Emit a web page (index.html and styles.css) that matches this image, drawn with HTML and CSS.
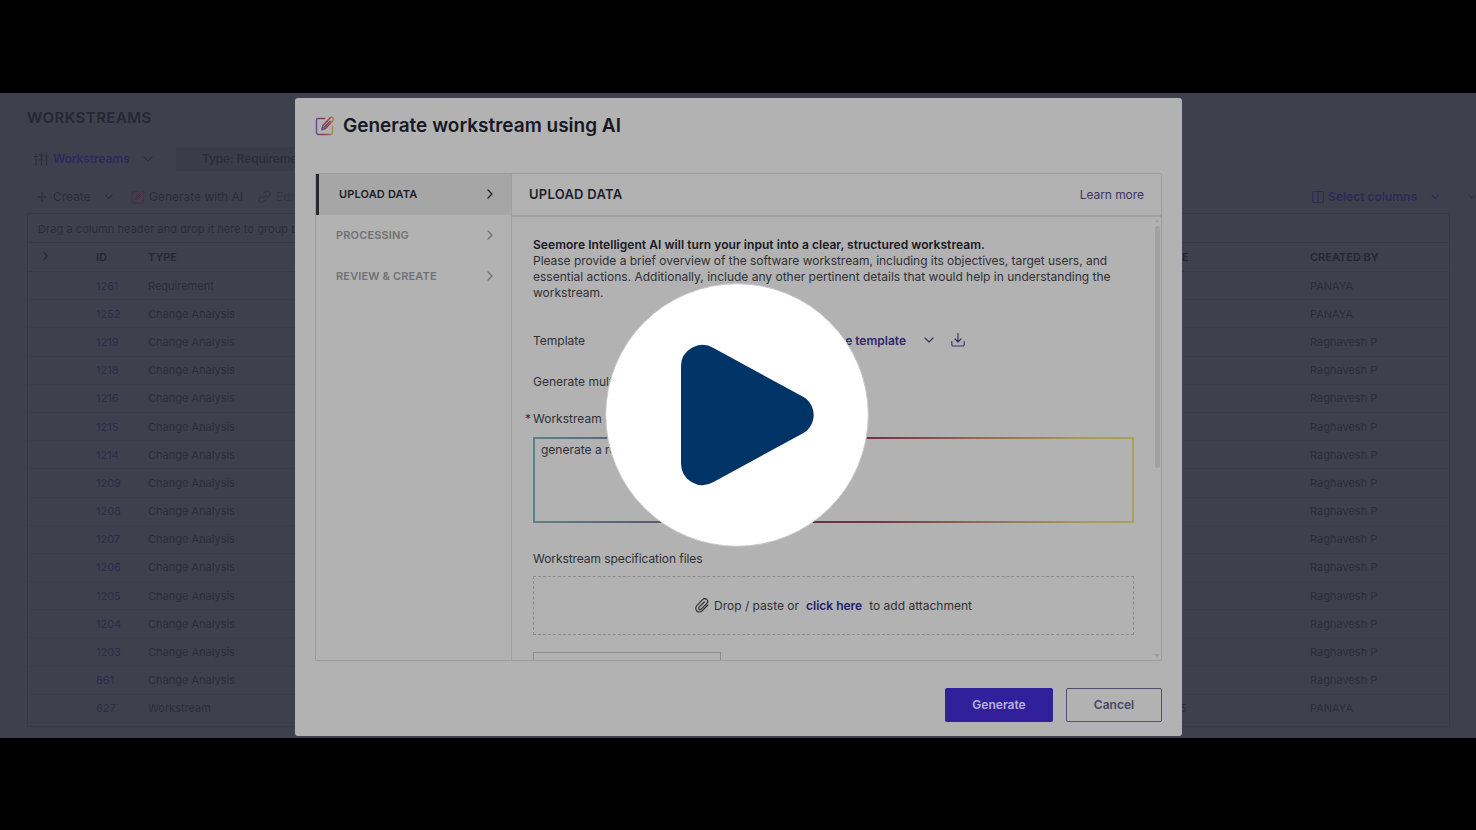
FILE: index.html
```html
<!DOCTYPE html>
<html lang="en">
<head>
  <meta charset="UTF-8" />
  <meta name="viewport" content="width=device-width, initial-scale=1" />
  <title>Workstreams</title>
  <link rel="stylesheet" href="styles.css">
</head>
<body>

  <!-- Shared icons -->
  <svg class="defs" width="0" height="0" aria-hidden="true">
    <defs>
      <linearGradient id="editGradient" x1="0" y1="0" x2="1" y2="0">
        <stop offset="0" stop-color="#66508c" />
        <stop offset="0.4" stop-color="#8b3a50" />
        <stop offset="0.7" stop-color="#9a5248" />
        <stop offset="1" stop-color="#a98c50" />
      </linearGradient>
    </defs>
    <symbol id="chevronDown" viewBox="0 0 10 10"><path d="M1 3l4 4 4-4" /></symbol>
    <symbol id="chevronRight" viewBox="0 0 10 10"><path d="M3 1l4 4-4 4" /></symbol>
    <symbol id="edit" viewBox="0 0 20 20">
      <path d="M10 2.500H3.200A1.700 1.700 0 0 0 1.500 4.200v12.600a1.700 1.700 0 0 0 1.700 1.700h12.600a1.700 1.700 0 0 0 1.700-1.700V10" />
      <path d="M15.500 1.600c1.300-1.200 4.100.9 2.800 2.600L10.500 12.500 6.800 13.800 7.700 9.800zM9 11.500l6-6.300" />
    </symbol>
  </svg>

  <div class="video">
    <main class="page">
      <h1>WORKSTREAMS</h1>

      <div class="filters">
        <svg class="icon" width="15" height="14" viewBox="0 0 15 14"><path d="M2 1v2M2 6v7M0.500 4.500h3M7.500 1v6M7.500 10v3M5.500 8h4M5.500 3h4M12.500 1v1M12.500 5v8M11 4h3" /></svg>
        <span class="view-name">Workstreams</span>
        <svg class="icon chev" width="10" height="10"><use href="#chevronDown" /></svg>
        <span class="filter-chip">Type: Requirement</span>
      </div>

      <div class="toolbar">
        <svg class="icon" width="10" height="10" viewBox="0 0 10 10"><path d="M5 0v10M0 5h10" /></svg>
        <span class="create">Create</span>
        <svg class="icon" width="9" height="9"><use href="#chevronDown" /></svg>
        <svg class="icon ai" width="14" height="14"><use href="#edit" /></svg>
        <span class="with-ai">Generate with AI</span>
        <svg class="icon faint" width="13" height="13" viewBox="0 0 13 13"><path d="M5 8l3-3M5.500 3.500L8 1.500a2.500 2.500 0 0 1 3.500 3.500L9 7.500M7.500 9.500L5 12a2.500 2.500 0 0 1-3.500-3.500L4 6" /></svg>
        <span class="faint-text">Edit</span>
        <span class="select-columns">
          <svg class="icon" width="12" height="12" viewBox="0 0 12 12"><rect x="0.500" y="0.500" width="11" height="11" rx="1.500" /><path d="M6 0v12" /></svg>
          <b>Select columns</b>
          <svg class="icon" width="9" height="9"><use href="#chevronDown" /></svg>
        </span>
        <svg class="icon" width="8" height="9"><use href="#chevronDown" /></svg>
      </div>

      <div class="grid">
        <div class="group-bar">Drag a column header and drop it here to group by</div>
        <div class="row head">
          <span><svg class="icon" width="9" height="10"><use href="#chevronRight" /></svg></span>
          <span>ID</span><span>TYPE</span><span>RELEASE</span><span>CREATED BY</span>
        </div>
        <div class="row"><span></span><span>1261</span><span>Requirement</span><span></span><span>PANAYA</span></div>
        <div class="row"><span></span><span>1252</span><span>Change Analysis</span><span></span><span>PANAYA</span></div>
        <div class="row"><span></span><span>1219</span><span>Change Analysis</span><span></span><span>Raghavesh P</span></div>
        <div class="row"><span></span><span>1218</span><span>Change Analysis</span><span></span><span>Raghavesh P</span></div>
        <div class="row"><span></span><span>1216</span><span>Change Analysis</span><span></span><span>Raghavesh P</span></div>
        <div class="row"><span></span><span>1215</span><span>Change Analysis</span><span></span><span>Raghavesh P</span></div>
        <div class="row"><span></span><span>1214</span><span>Change Analysis</span><span></span><span>Raghavesh P</span></div>
        <div class="row"><span></span><span>1209</span><span>Change Analysis</span><span></span><span>Raghavesh P</span></div>
        <div class="row"><span></span><span>1208</span><span>Change Analysis</span><span></span><span>Raghavesh P</span></div>
        <div class="row"><span></span><span>1207</span><span>Change Analysis</span><span></span><span>Raghavesh P</span></div>
        <div class="row"><span></span><span>1206</span><span>Change Analysis</span><span></span><span>Raghavesh P</span></div>
        <div class="row"><span></span><span>1205</span><span>Change Analysis</span><span></span><span>Raghavesh P</span></div>
        <div class="row"><span></span><span>1204</span><span>Change Analysis</span><span></span><span>Raghavesh P</span></div>
        <div class="row"><span></span><span>1203</span><span>Change Analysis</span><span></span><span>Raghavesh P</span></div>
        <div class="row"><span></span><span>861</span><span>Change Analysis</span><span></span><span>Raghavesh P</span></div>
        <div class="row"><span></span><span>627</span><span>Workstream</span><span>5</span><span>PANAYA</span></div>
      </div>
    </main>

    <!-- Generate dialog -->
    <section class="modal" role="dialog" aria-labelledby="modalTitle">
      <header class="modal-title">
        <svg class="icon" width="20" height="20"><use href="#edit" /></svg>
        <h2 id="modalTitle">Generate workstream using AI</h2>
      </header>

      <div class="wizard">
        <nav class="steps">
          <div class="step active"><span>UPLOAD DATA</span><svg class="icon" width="10" height="10"><use href="#chevronRight" /></svg></div>
          <div class="step"><span>PROCESSING</span><svg class="icon" width="10" height="10"><use href="#chevronRight" /></svg></div>
          <div class="step"><span>REVIEW &amp; CREATE</span><svg class="icon" width="10" height="10"><use href="#chevronRight" /></svg></div>
        </nav>

        <div class="panel">
          <div class="panel-head">
            <h3>UPLOAD DATA</h3>
            <a class="learn">Learn more</a>
          </div>
          <div class="panel-body">
            <form class="form">
              <p class="intro">
                <b>Seemore Intelligent AI will turn your input into a clear, structured workstream.</b><br>
                <span class="overview">Please provide a brief overview of the software workstream, including its objectives, target users, and</span><br>
                essential actions. Additionally, include any other pertinent details that would help in understanding the<br>
                workstream.
              </p>
              <div class="field template">
                <label>Template</label>
                <b>Use template</b>
                <svg class="icon" width="10" height="10"><use href="#chevronDown" /></svg>
                <svg class="icon download" width="14" height="14" viewBox="0 0 14 14"><path d="M7 0.500v8M4 6l3 3 3-3M0.800 8.500v3a1.500 1.500 0 0 0 1.500 1.500h9.400a1.500 1.500 0 0 0 1.500-1.500v-3" /></svg>
              </div>
              <div class="field multiple"><label>Generate multiple</label></div>
              <div class="field required"><i>*</i><label>Workstream description</label></div>
              <div class="prompt">generate a requirement</div>
              <div class="field files"><label>Workstream specification files</label></div>
              <div class="drop">
                <svg class="icon" width="14" height="15" viewBox="0 0 14 15"><path d="M12.800 7l-5.700 5.900a3.700 3.700 0 0 1-5.300-5.200L7.600 1.700a2.800 2.800 0 0 1 4.300 3.700L6.300 11.200a1.400 1.400 0 0 1-2.200-2L9.300 4" /></svg>
                <span>Drop / paste or</span><b>click here</b><span>to add attachment</span>
              </div>
              <div class="next-input"></div>
            </form>
            <div class="scrollbar">
              <i class="arrow up"></i>
              <div class="thumb"></div>
              <i class="arrow down"></i>
            </div>
          </div>
        </div>
      </div>

      <footer class="actions">
        <button class="primary">Generate</button>
        <button>Cancel</button>
      </footer>
    </section>
  </div>

  <svg class="play" width="264" height="264" viewBox="0 0 264 264" role="img" aria-label="Play">
    <circle cx="132" cy="132" r="131.300" />
    <path d="M76 83.500A21.500 21.500 0 0 1 108.500 65L198.500 114A21 21 0 0 1 198.500 150L108.500 199A21.500 21.500 0 0 1 76 180.500z" />
  </svg>

</body>
</html>
```

FILE: styles.css
```css
* {
  box-sizing: border-box;
}

body {
  margin: 0;
  padding-top: 93px;
  height: 830px;
  background: #000;
  font-family: Inter, "Liberation Sans", sans-serif;
  overflow: hidden;
}

h1, h2, h3, p {
  margin: 0;
}

.defs {
  position: absolute;
}

.icon {
  flex: none;
  fill: none;
  stroke: currentColor;
  stroke-width: 1.2;
  stroke-linecap: round;
  stroke-linejoin: round;
}

.video {
  position: relative;
  height: 645px;
  background: #3f404d;
}

/* Dimmed page */
.page {
  height: 645px;
  padding-left: 27px;
  color: #2c2d39;
  overflow: hidden;
}

.page h1 {
  padding-top: 15px;
  font-size: 15px;
  line-height: 19px;
  font-weight: 600;
  letter-spacing: 0.45px;
  color: #262733;
}

.filters {
  display: flex;
  align-items: center;
  height: 22px;
  margin-top: 21px;
  padding-left: 7px;
}

.view-name {
  margin: 0 14px 0 4px;
  width: 76px;
  font-size: 12px;
  line-height: 20px;
  font-weight: 600;
  letter-spacing: -0.1px;
  color: #2b2960;
}

.filter-chip {
  margin-left: 23px;
  padding-left: 26px;
  width: 140px;
  font-size: 12px;
  line-height: 24px;
  font-weight: 500;
  letter-spacing: -0.1px;
  background: #3b3c49;
  white-space: nowrap;
}

.toolbar {
  display: flex;
  align-items: center;
  height: 33px;
  margin-top: 10px;
  padding-left: 10px;
  font-size: 12px;
  white-space: nowrap;
}

.toolbar .create {
  width: 51px;
  margin-left: 6px;
}

.toolbar .ai {
  margin: 0 4px 0 18px;
  color: #452c40;
}

.toolbar .with-ai {
  width: 95px;
  margin-right: 14px;
}

.faint,
.faint-text {
  color: #343542;
}

.faint-text {
  margin-left: 5px;
}

.select-columns {
  display: flex;
  align-items: center;
  margin: 0 28px 0 auto;
  color: #2b2b53;
}

.select-columns b {
  margin: 0 14px 0 4px;
  font-weight: 600;
}

.grid {
  width: 1423px;
  height: 514px;
  border: 1px solid #383945;
}

.group-bar {
  height: 28px;
  padding-left: 10px;
  font-size: 11px;
  line-height: 30px;
  letter-spacing: 0.06px;
}

.row {
  display: grid;
  grid-template-columns: 68px 52px 994px 168px 1fr;
  height: 28.2px;
  align-items: center;
  border-bottom: 1px solid #3c3d4a;
  font-size: 11px;
}

.row span:first-child {
  padding-left: 13px;
}

.row span:nth-child(2) {
  color: #2c2c4b;
}

.row span:nth-child(4) {
  padding-left: 38px;
}

.row.head {
  height: 30px;
  border-top: 1px solid #383945;
  border-bottom-color: #383945;
  font-weight: 600;
}

.row.head span {
  color: #262732;
}

.row.head span:nth-child(4) {
  padding-left: 0;
  letter-spacing: -0.3px;
}

/* Dialog */
.modal {
  position: absolute;
  left: 295px;
  top: 5px;
  width: 887px;
  height: 638px;
  padding: 0 20px;
  background: #b2b2b2;
  border-radius: 3px;
  color: #303035;
}

.modal-title {
  display: flex;
  align-items: center;
  gap: 8px;
  height: 75px;
  padding-bottom: 20px;
  color: #171725;
}

.modal-title .icon {
  stroke: url(#editGradient);
  stroke-width: 1.5;
}

.modal-title h2 {
  font-size: 19px;
  font-weight: 600;
}

.wizard {
  display: flex;
  height: 488px;
  border: 1px solid #9c9c9e;
  border-radius: 2px;
}

.steps {
  width: 196px;
  border-right: 1px solid #9f9fa1;
}

.step {
  display: flex;
  align-items: center;
  justify-content: space-between;
  height: 41px;
  padding: 0 16px 1px 20px;
  font-size: 11px;
  font-weight: 600;
  letter-spacing: 0.15px;
  color: #717174;
}

.step .icon {
  stroke-width: 1.3;
}

.step.active {
  border-left: 3px solid #28282e;
  background: #a6a6a6;
  color: #1c1c29;
}

.panel {
  flex: 1;
  display: flex;
  flex-direction: column;
}

.panel-head {
  display: flex;
  justify-content: space-between;
  align-items: center;
  height: 43px;
  padding: 0 17px 1px;
  border-bottom: 2px solid #a0a0a2;
}

.panel-head h3 {
  font-size: 13px;
  font-weight: 600;
  letter-spacing: 0.25px;
  color: #1e1e2b;
}

.learn {
  font-size: 12px;
  letter-spacing: -0.05px;
  color: #3d345f;
}

.panel-body {
  flex: 1;
  display: flex;
  min-height: 0;
  overflow: hidden;
}

.form {
  width: 643px;
  padding: 20px 21px 0 21px;
  font-size: 12px;
}

.intro {
  line-height: 16.1px;
  white-space: nowrap;
}

.intro b {
  font-weight: 600;
  letter-spacing: 0.05px;
  color: #17171f;
}

.overview {
  letter-spacing: -0.03px;
}

.field {
  display: flex;
  align-items: center;
  height: 20px;
}

.template {
  margin-top: 29px;
  color: #3d3566;
}

.template label {
  width: 288px;
  color: #303035;
}

.template b {
  width: 85px;
  margin-right: 18px;
  font-weight: 600;
  color: #30256b;
  text-align: right;
  white-space: nowrap;
}

.template .download {
  margin-left: 17px;
}

.multiple {
  margin-top: 21px;
}

.required {
  margin: 17px 0 0 -8px;
}

.required i {
  width: 8px;
  font-style: normal;
  color: #5c2028;
}

.prompt {
  height: 86px;
  margin-top: 9px;
  padding: 3px 6px;
  border: 2px solid;
  border-image: linear-gradient(90deg, #5d8285, #5b5a70 20%, #68304a 45%, #743247 57%, #946b56 75%, #a59b57 92%, #a8a256) 1;
}

.files {
  margin-top: 25px;
  letter-spacing: -0.07px;
}

.drop {
  display: flex;
  align-items: center;
  justify-content: center;
  height: 59px;
  margin-top: 8px;
  border: 1px dashed #8c8c8e;
}

.drop .icon {
  margin-right: 5px;
}

.drop b {
  margin: 0 7px;
  font-weight: 600;
  color: #251c68;
}

.next-input {
  width: 188px;
  height: 30px;
  margin-top: 17px;
  border: 1px solid #8b8b8f;
}

.scrollbar {
  display: flex;
  flex-direction: column;
  width: 5px;
}

.thumb {
  height: 242px;
  margin-top: 4px;
  background: #a1a1a1;
  border-radius: 2px;
}

.arrow {
  width: 4px;
  margin-top: 2px;
  border: 2px solid transparent;
  border-top: 0;
  border-bottom: 3px solid #a0a0a0;
}

.arrow.down {
  margin: auto 0 3px;
  border-top: 3px solid #959595;
  border-bottom: 0;
}

.actions {
  display: flex;
  justify-content: flex-end;
  gap: 13px;
  padding-top: 27px;
}

.actions button {
  width: 96px;
  height: 34px;
  padding: 0 0 2px;
  border: 1px solid #504e6c;
  border-radius: 2px;
  background: none;
  font: 600 12px Inter, "Liberation Sans", sans-serif;
  color: #4b4668;
}

.actions .primary {
  width: 108px;
  border: 0;
  background: #31209a;
  color: #b8b2d8;
}

/* Play overlay */
.play {
  position: absolute;
  left: 605px;
  top: 283px;
}

.play circle {
  fill: #fff;
  stroke: #c8c8c8;
  stroke-width: 1;
}

.play path {
  fill: #003366;
}
```
